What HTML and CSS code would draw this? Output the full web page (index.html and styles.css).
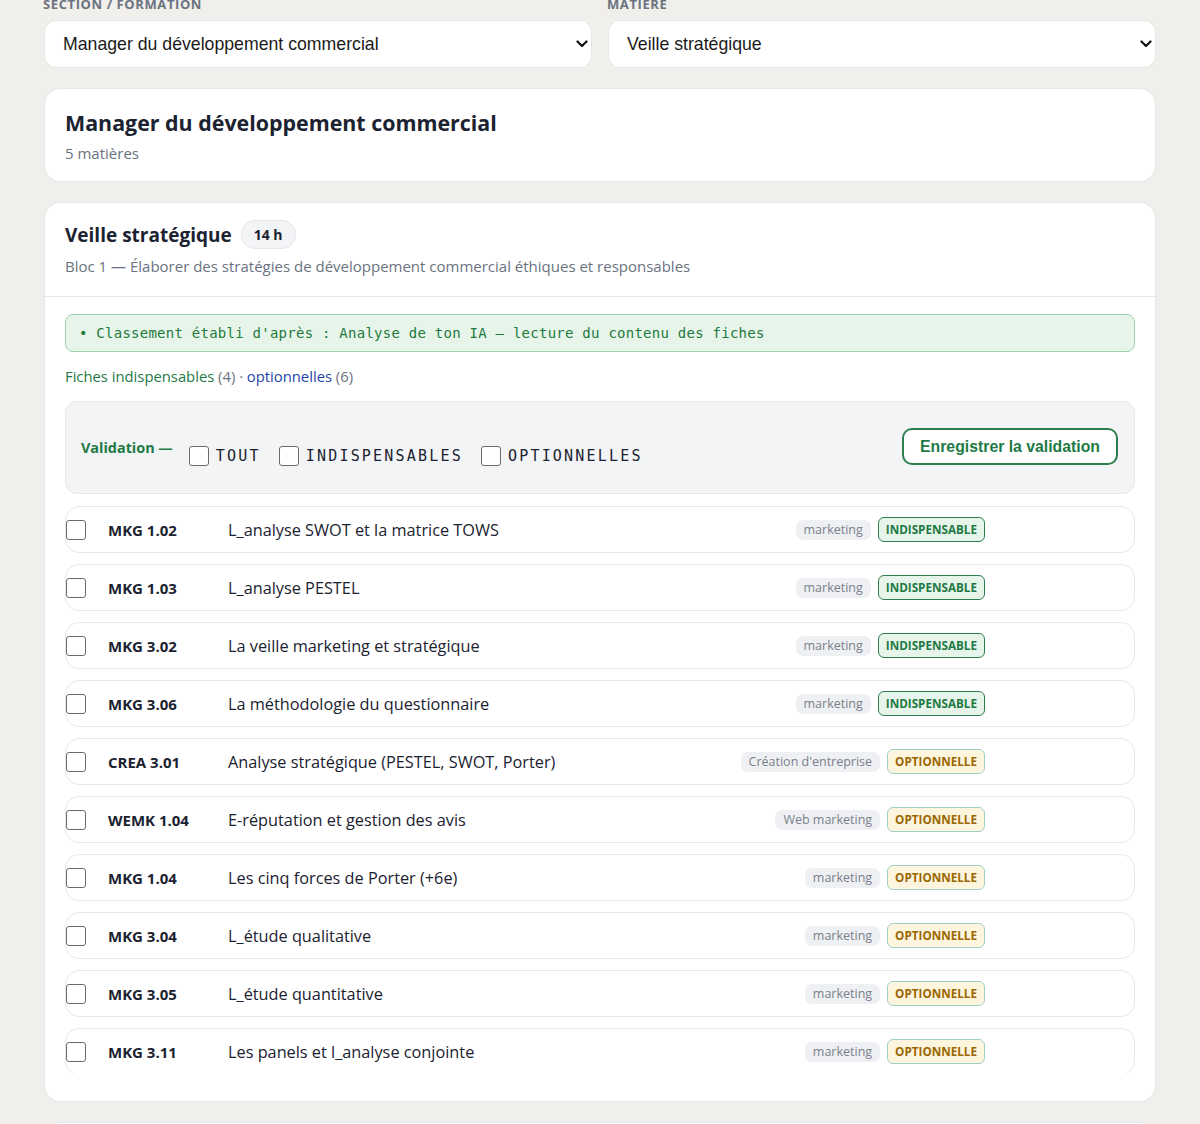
FILE: index.html
```html
<!DOCTYPE html>
<html lang="fr">
<head>
<meta charset="utf-8">
<title>Veille stratégique</title>
<link rel="stylesheet" href="styles.css">
</head>
<body>
<main class="page">
  <div class="pickers">
    <label class="field">
      <span class="field-label">Section / Formation</span>
      <span class="select">
        <span class="select-text">Manager du développement commercial</span>
        <svg class="chev" viewBox="0 0 12 8" width="12" height="8"><path d="M1.5 1.5 6 6l4.5-4.5" fill="none" stroke="#111" stroke-width="2.2" stroke-linecap="round" stroke-linejoin="round"/></svg>
      </span>
    </label>
    <label class="field">
      <span class="field-label">Matière</span>
      <span class="select">
        <span class="select-text">Veille stratégique</span>
        <svg class="chev" viewBox="0 0 12 8" width="12" height="8"><path d="M1.5 1.5 6 6l4.5-4.5" fill="none" stroke="#111" stroke-width="2.2" stroke-linecap="round" stroke-linejoin="round"/></svg>
      </span>
    </label>
  </div>

  <section class="card formation">
    <h1 class="formation-title">Manager du développement commercial</h1>
    <p class="muted">5 matières</p>
  </section>

  <section class="card subject">
    <header class="subject-head">
      <div class="subject-title-row">
        <h2 class="subject-title">Veille stratégique</h2>
        <span class="hours">14 h</span>
      </div>
      <p class="muted bloc">Bloc 1 — Élaborer des stratégies de développement commercial éthiques et responsables</p>
    </header>
    <div class="subject-body">
      <div class="note">• Classement établi d'après : Analyse de ton IA — lecture du contenu des fiches</div>
      <p class="counts"><span class="c-green">Fiches indispensables</span> (4) · <span class="c-blue">optionnelles</span> (6)</p>
      <div class="validation">
        <div class="validation-left">
          <span class="validation-label">Validation —</span>
          <label class="vcheck"><span class="box"></span>TOUT</label>
          <label class="vcheck"><span class="box"></span>INDISPENSABLES</label>
          <label class="vcheck"><span class="box"></span>OPTIONNELLES</label>
        </div>
        <button class="save">Enregistrer la validation</button>
      </div>
      <div class="list">
        <div class="row"><span class="box"></span><span class="code">MKG 1.02</span><span class="title">L_analyse SWOT et la matrice TOWS</span><span class="tag">marketing</span><span class="status ind">INDISPENSABLE</span></div>
        <div class="row"><span class="box"></span><span class="code">MKG 1.03</span><span class="title">L_analyse PESTEL</span><span class="tag">marketing</span><span class="status ind">INDISPENSABLE</span></div>
        <div class="row"><span class="box"></span><span class="code">MKG 3.02</span><span class="title">La veille marketing et stratégique</span><span class="tag">marketing</span><span class="status ind">INDISPENSABLE</span></div>
        <div class="row"><span class="box"></span><span class="code">MKG 3.06</span><span class="title">La méthodologie du questionnaire</span><span class="tag">marketing</span><span class="status ind">INDISPENSABLE</span></div>
        <div class="row"><span class="box"></span><span class="code">CREA 3.01</span><span class="title">Analyse stratégique (PESTEL, SWOT, Porter)</span><span class="tag">Création d'entreprise</span><span class="status opt">OPTIONNELLE</span></div>
        <div class="row"><span class="box"></span><span class="code">WEMK 1.04</span><span class="title">E-réputation et gestion des avis</span><span class="tag">Web marketing</span><span class="status opt">OPTIONNELLE</span></div>
        <div class="row"><span class="box"></span><span class="code">MKG 1.04</span><span class="title">Les cinq forces de Porter (+6e)</span><span class="tag">marketing</span><span class="status opt">OPTIONNELLE</span></div>
        <div class="row"><span class="box"></span><span class="code">MKG 3.04</span><span class="title">L_étude qualitative</span><span class="tag">marketing</span><span class="status opt">OPTIONNELLE</span></div>
        <div class="row"><span class="box"></span><span class="code">MKG 3.05</span><span class="title">L_étude quantitative</span><span class="tag">marketing</span><span class="status opt">OPTIONNELLE</span></div>
        <div class="row"><span class="box"></span><span class="code">MKG 3.11</span><span class="title">Les panels et l_analyse conjointe</span><span class="tag">marketing</span><span class="status opt">OPTIONNELLE</span></div>
      </div>
    </div>
  </section>

  <section class="card next"></section>
</main>
</body>
</html>
```

FILE: styles.css
```css
* { box-sizing: border-box; }
html, body { margin: 0; padding: 0; }
body {
  background: #f0efeb;
  font-family: "Open Sans", "Noto Sans", sans-serif;
  color: #1f2430;
  overflow: hidden;
}
.page {
  width: 1112px;
  margin: -4px 0 0 44px;
  display: flex;
  flex-direction: column;
  gap: 20px;
}
.pickers {
  display: grid;
  grid-template-columns: 1fr 1fr;
  gap: 16px;
}
.field { display: flex; flex-direction: column; gap: 8px; }
.field-label {
  font-size: 13px;
  font-weight: 700;
  letter-spacing: 0.6px;
  text-transform: uppercase;
  color: #6b7280;
  line-height: 16px;
  margin-left: -1px;
}
.select {
  height: 48px;
  background: #fff;
  border: 1px solid #e6e6e6;
  border-radius: 12px;
  display: flex;
  align-items: center;
  justify-content: space-between;
  padding: 0 3px 0 18px;
  font-family: "Liberation Sans", Arial, sans-serif;
  font-size: 17.7px;
  color: #1a1a1a;
}
.chev { display: block; }
.card {
  background: #fff;
  border: 1px solid #e6e7ea;
  border-radius: 16px;
}
.formation { padding: 19px 20px 17px; }
.formation-title {
  margin: 0;
  font-size: 21.4px;
  font-weight: 700;
  color: #1b2230;
  line-height: 30px;
}
.muted { color: #6b7280; margin: 0; }
.formation .muted { font-size: 15px; margin-top: 4px; line-height: 22px; }

.subject { padding: 0 0 28px; overflow: hidden; }
.subject-head {
  padding: 17px 20px 20px;
  border-bottom: 1px solid #e6e7ea;
}
.subject-title-row { display: flex; align-items: center; gap: 9px; }
.subject-title {
  margin: 0;
  font-size: 19px;
  font-weight: 700;
  color: #1b2230;
  line-height: 28px;
}
.hours {
  font-size: 14px;
  font-weight: 700;
  color: #1b2230;
  background: #f3f4f6;
  border: 1px solid #e3e5e9;
  border-radius: 14px;
  padding: 4px 12px;
  line-height: 19px;
}
.bloc { font-size: 15px; margin-top: 7px; line-height: 20px; }

.subject-body { padding: 17px 20px 0; }
.note {
  background: #e7f4ea;
  border: 1px solid #9fd2ad;
  border-radius: 8px;
  padding: 8px 13px;
  font-family: "DejaVu Sans Mono", monospace;
  font-size: 14px;
  letter-spacing: 0.25px;
  color: #1f7a3e;
  line-height: 20px;
}
.counts {
  margin: 14px 0 0;
  font-size: 14.8px;
  color: #6b7280;
  line-height: 20px;
}
.c-green { color: #1e7a45; }
.c-blue { color: #2545a8; }

.validation {
  margin-top: 15px;
  background: #f3f4f6;
  border: 1px solid #e6e7ea;
  border-radius: 12px;
  height: 93px;
  display: flex;
  align-items: center;
  justify-content: space-between;
  padding: 0 16px 0 15px;
}
.validation-left { display: flex; align-items: center; }
.validation-label {
  font-size: 14.4px;
  font-weight: 700;
  color: #1e7a45;
  margin-right: 16px;
}
.vcheck {
  display: flex;
  align-items: center;
  gap: 7px;
  margin-right: 18px;
  font-family: "DejaVu Sans Mono", monospace;
  font-size: 15px;
  letter-spacing: 2.2px;
  color: #1b2230;
  position: relative;
  top: 8px;
}
.box {
  width: 20px;
  height: 20px;
  flex: none;
  background: #fff;
  border: 1.5px solid #6b6b6b;
  border-radius: 3px;
}
.save {
  height: 37px;
  padding: 0 16px;
  background: #fff;
  border: 2px solid #2e7d4f;
  border-radius: 10px;
  font-family: "Liberation Sans", Arial, sans-serif;
  font-size: 15.8px;
  font-weight: 700;
  color: #1e7a45;
  position: relative;
  top: -1px;
}

.list {
  margin-top: 12px;
  height: 567px;
  overflow: hidden;
  display: flex;
  flex-direction: column;
  gap: 11px;
}
.row {
  flex: none;
  height: 47px;
  border: 1px solid #e6e7ea;
  border-radius: 14px;
  display: flex;
  align-items: center;
  padding: 0 149px 0 0;
}
.code {
  width: 120px;
  margin-left: 22px;
  font-size: 15px;
  font-weight: 700;
  color: #1b2230;
}
.title {
  flex: 1;
  font-size: 16.3px;
  color: #1b2230;
}
.tag {
  font-size: 12.5px;
  color: #7b808a;
  background: #eef0f4;
  border-radius: 7px;
  padding: 1px 8px 2px;
  margin-right: 7px;
  line-height: 17px;
}
.status {
  font-size: 11.7px;
  font-weight: 700;
  border-radius: 6px;
  padding: 3px 7px;
  line-height: 17px;
}
.status.ind { color: #1e7a45; background: #e7f4ea; border: 1.5px solid #2e7d4f; }
.status.opt { color: #9a6700; background: #fdf5dd; border: 1.5px solid #9fcfc9; }

.next { height: 40px; }
```
